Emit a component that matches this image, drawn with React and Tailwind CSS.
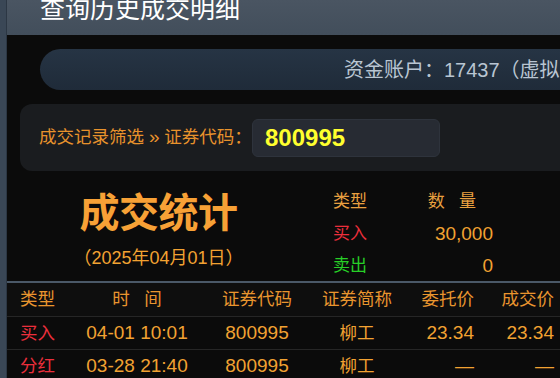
const font = { fontFamily: '"Liberation Sans", "Noto Sans CJK SC", sans-serif' };

const rows = [
  { type: '买入', time: '04-01 10:01', code: '800995', name: '柳工', order: '23.34', deal: '23.34' },
  { type: '分红', time: '03-28 21:40', code: '800995', name: '柳工', order: '—', deal: '—' },
];

function Cols({ cells, className, num }) {
  const n = num ? 'text-[19px]' : '';
  return (
    <div className={`flex items-center whitespace-nowrap ${className}`}>
      <div className="w-[74px] pl-[13px]">{cells[0]}</div>
      <div className={`w-[112px] text-center ${n}`}>{cells[1]}</div>
      <div className={`w-[128px] text-center ${n}`}>{cells[2]}</div>
      <div className="w-[72px] text-center">{cells[3]}</div>
      <div className={`w-[81px] text-right ${n}`}>{cells[4]}</div>
      <div className={`w-[80px] text-right ${n}`}>{cells[5]}</div>
    </div>
  );
}

export default function App() {
  return (
    <div className="w-[560px] h-[378px] overflow-hidden flex bg-[#3a4756]" style={font}>
      {/* left frame strip */}
      <div className="w-[7px] shrink-0 border-r border-[#2c3744]" />

      <div className="flex-1 flex flex-col bg-[#0b0b0b] overflow-hidden">
        {/* title bar */}
        <div className="h-[35px] shrink-0 bg-gradient-to-b from-[#4a5562] to-[#424e5b] pl-[33px]">
          <div className="text-[25px] leading-[25px] -mt-[3px] text-white whitespace-nowrap">查询历史成交明细</div>
        </div>

        {/* account pill */}
        <div className="mt-[14px] ml-[33px] w-[600px] h-[41px] shrink-0 rounded-l-full bg-gradient-to-b from-[#263444] to-[#1f2b39] flex items-center pl-[304px] whitespace-nowrap text-[20px] text-[#b9c5d2]">
          资金账户：17437（虚拟账户）
        </div>

        {/* filter panel */}
        <div className="mt-[14px] ml-[13px] w-[600px] h-[67px] shrink-0 rounded-l-xl bg-[#1a1c1f] flex items-center pl-[19px] whitespace-nowrap">
          <span className="w-[213px] shrink-0 text-[17.5px] text-[#e8922c]">成交记录筛选 <span className="text-[19px]">»</span> 证券代码：</span>
          <div className="shrink-0 w-[188px] h-[38px] rounded-md bg-[#272b33] border border-[#2e333c] flex items-center pl-[12px] text-[24px] font-bold text-[#ffff2e]">
            800995
          </div>
        </div>

        {/* statistics */}
        <div className="h-[110px] shrink-0 flex">
          <div className="w-[303px] flex flex-col items-center pt-[18px]">
            <div className="text-[40px] leading-[48px] font-bold text-[#f7a136] tracking-[-0.5px]">成交统计</div>
            <div className="mt-[10px] text-[18px] leading-[22px] text-[#f2a232] whitespace-nowrap">（2025年04月01日）</div>
          </div>
          <div className="ml-[23px] pt-[15px] text-[17px]">
            <div className="flex h-[32px] items-center">
              <div className="w-[60px] text-[#e9a040]">类型</div>
              <div className="w-[100px] text-right pr-[17px] text-[#e9a040]">数&nbsp;&nbsp;&nbsp;量</div>
            </div>
            <div className="flex h-[32px] items-center">
              <div className="w-[60px] text-[#ec2f3c]">买入</div>
              <div className="w-[100px] text-right text-[19px] text-[#f2a232]">30,000</div>
            </div>
            <div className="flex h-[32px] items-center">
              <div className="w-[60px] text-[#27cf27]">卖出</div>
              <div className="w-[100px] text-right text-[19px] text-[#f2a232]">0</div>
            </div>
          </div>
        </div>

        {/* detail table */}
        <div className="border-t-2 border-[#4a5867] text-[17.5px]">
          <Cols
            className="h-[34px] border-b border-[#262626] bg-[#0e0e0e] text-[#e9952e]"
            cells={['类型', '时\u00a0\u00a0\u00a0间', '证券代码', '证券简称', '委托价', '成交价']}
          />
          {rows.map((r) => (
            <Cols
              key={r.time}
              num
              className="h-[33px] pt-[1px] border-b border-[#262626] text-[#f2a232]"
              cells={[
                <span className="text-[#ec2f3c]">{r.type}</span>,
                r.time,
                r.code,
                r.name,
                r.order,
                r.deal,
              ]}
            />
          ))}
        </div>
      </div>
    </div>
  );
}
